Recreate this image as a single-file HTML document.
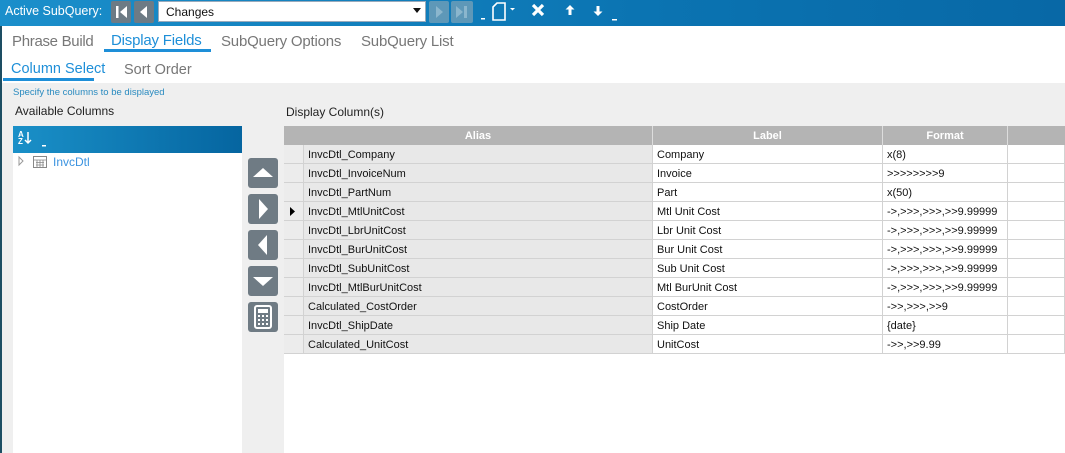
<!DOCTYPE html>
<html><head><meta charset="utf-8"><style>
*{margin:0;padding:0;box-sizing:border-box}
body{width:1065px;height:453px;overflow:hidden;background:#efefef;font-family:"Liberation Sans",sans-serif;position:relative}
.a{position:absolute}
.top{left:0;top:0;width:1065px;height:26px;background:linear-gradient(90deg,#1b8fcb,#0b74b2 60%,#0868a6)}
.tb{background:#6d7b85;border-radius:2px}
.row{position:absolute;left:284px;height:19px;width:781px;font-size:11px;color:#111}
.row div{position:absolute;top:0;height:19px;line-height:20px;padding-left:4px;border-bottom:1px solid #d2d2d2;border-right:1px solid #d2d2d2}
.c0{left:0;width:20px;background:#ececec}
.c1{left:20px;width:349px;background:#e8e8e8}
.c2{left:369px;width:230px;background:#fff}
.c3{left:599px;width:125px;background:#fff}
.c4{left:724px;width:57px;background:#fff}
.btn{position:absolute;left:248px;width:30px;height:30px;background:#6f7b84;border-radius:3px}
</style></head><body>
<div class="a" style="left:0;top:0;width:2px;height:453px;background:#1d4e63"></div>
<div class="a top"></div>
<div class="a" style="left:5px;top:4px;color:#fff;font-size:12.5px">Active SubQuery:</div>
<div class="a tb" style="left:111px;top:1px;width:20px;height:22px"><svg width="20" height="22"><rect x="5" y="5" width="2.5" height="12" fill="#fff"/><path d="M16 5 L9 11 L16 17Z" fill="#fff"/></svg></div>
<div class="a tb" style="left:134px;top:1px;width:20px;height:22px"><svg width="20" height="22"><path d="M13 5 L6 11 L13 17Z" fill="#fff"/></svg></div>
<div class="a" style="left:158px;top:1px;width:268px;height:21px;background:#fff;border:1px solid #9ab"></div>
<div class="a" style="left:166px;top:5px;font-size:12px;color:#111">Changes</div>
<div class="a" style="left:413px;top:8px;width:0;height:0;border-left:4px solid transparent;border-right:4px solid transparent;border-top:5px solid #111"></div>
<div class="a" style="left:429px;top:1px;width:20px;height:22px;background:#5e98b8;border-radius:2px"><svg width="20" height="22"><path d="M7 5 L14 11 L7 17Z" fill="#8bb6cd"/></svg></div>
<div class="a" style="left:451px;top:1px;width:22px;height:22px;background:#5e98b8;border-radius:2px"><svg width="22" height="22"><path d="M5 5 L12 11 L5 17Z" fill="#8bb6cd"/><rect x="13" y="5" width="3" height="12" fill="#8bb6cd"/></svg></div>
<svg class="a" style="left:478px;top:0" width="150" height="26">
<rect x="3" y="18" width="4" height="1.5" fill="#fff"/>
<path d="M15 7 L19 3 L27 3 L27 20 L15 20Z" fill="none" stroke="#fff" stroke-width="1.6"/>
<path d="M32 8 L37 8 L34.5 10.5Z" fill="#fff"/>
<path d="M55 5 L65 15 M65 5 L55 15" stroke="#fff" stroke-width="3.2"/>
<path d="M92 5 L96.5 9.5 L93.5 9.5 L93.5 15 L90.5 15 L90.5 9.5 L87.5 9.5Z" fill="#fff"/>
<path d="M120 16 L124.5 11.5 L121.5 11.5 L121.5 6 L118.5 6 L118.5 11.5 L115.5 11.5Z" fill="#fff"/>
<rect x="134" y="19" width="5" height="1.5" fill="#fff"/>
</svg>
<div class="a" style="left:2px;top:26px;width:1063px;height:57px;background:#fff"></div>
<div class="a" style="left:12px;top:33px;font-size:15px;color:#777;letter-spacing:-0.3px">Phrase Build</div>
<div class="a" style="left:111px;top:32px;font-size:15px;color:#1e8fd8;letter-spacing:-0.2px">Display Fields</div>
<div class="a" style="left:104px;top:49px;width:107px;height:3px;background:#1e8fd8"></div>
<div class="a" style="left:221px;top:33px;font-size:15px;color:#777;letter-spacing:-0.2px">SubQuery Options</div>
<div class="a" style="left:361px;top:33px;font-size:15px;color:#777;letter-spacing:-0.2px">SubQuery List</div>
<div class="a" style="left:11px;top:61px;font-size:14.5px;color:#1e8fd8">Column Select</div>
<div class="a" style="left:3px;top:78px;width:91px;height:3px;background:#1e8fd8"></div>
<div class="a" style="left:124px;top:62px;font-size:14.5px;color:#777">Sort Order</div>
<div class="a" style="left:13px;top:87px;font-size:9.5px;color:#2a8bc0">Specify the columns to be displayed</div>
<div class="a" style="left:15px;top:104px;font-size:12px;color:#222">Available Columns</div>
<div class="a" style="left:286px;top:105px;font-size:12px;color:#222">Display Column(s)</div>
<div class="a" style="left:13px;top:126px;width:229px;height:327px;background:#fff"></div>
<div class="a" style="left:13px;top:126px;width:229px;height:27px;background:linear-gradient(90deg,#1a90c8,#0565a0)"></div>
<div class="a" style="left:18px;top:131px;color:#fff;font-size:8px;line-height:7px;font-weight:bold">A<br>Z</div>
<svg class="a" style="left:24px;top:131px" width="30" height="16"><path d="M4 1 L4 12 M1 9 L4 12 L7 9" stroke="#fff" stroke-width="1.5" fill="none"/><rect x="18" y="14" width="4" height="1.5" fill="#fff"/></svg>
<svg class="a" style="left:17px;top:155px" width="40" height="14"><path d="M2 2 L6 6 L2 10Z" fill="none" stroke="#999"/><rect x="16.5" y="1.5" width="13" height="11" fill="none" stroke="#888"/><path d="M16 5 H30 M19 7.5 H27 M19 10 H27 M20 5 V12 M23 5 V12 M26 5 V12" stroke="#888" stroke-width="0.8"/></svg>
<div class="a" style="left:53px;top:155px;font-size:12px;color:#3b93e0">InvcDtl</div>
<div class="btn" style="top:158px"><svg width="30" height="30"><path d="M5 19 L15 10 L25 19Z" fill="#fff"/></svg></div>
<div class="btn" style="top:194px"><svg width="30" height="30"><path d="M11 5 L20 15 L11 25Z" fill="#fff"/></svg></div>
<div class="btn" style="top:230px"><svg width="30" height="30"><path d="M19 5 L10 15 L19 25Z" fill="#fff"/></svg></div>
<div class="btn" style="top:266px"><svg width="30" height="30"><path d="M5 11 L15 20 L25 11Z" fill="#fff"/></svg></div>
<div class="btn" style="top:302px"><svg width="30" height="30"><rect x="7" y="4" width="16" height="22" rx="2" fill="none" stroke="#fff" stroke-width="2"/><rect x="10" y="7" width="10" height="4" fill="#fff"/><g fill="#fff"><rect x="10" y="13" width="2" height="2"/><rect x="14" y="13" width="2" height="2"/><rect x="18" y="13" width="2" height="2"/><rect x="10" y="17" width="2" height="2"/><rect x="14" y="17" width="2" height="2"/><rect x="18" y="17" width="2" height="2"/><rect x="10" y="21" width="2" height="2"/><rect x="14" y="21" width="2" height="2"/><rect x="18" y="21" width="2" height="2"/></g></svg></div>
<div class="a" style="left:284px;top:126px;width:781px;height:327px;background:#fff"></div>
<div class="a" style="left:284px;top:126px;width:781px;height:19px;background:#b4b4b4;font-size:11px;font-weight:bold;color:#fff;line-height:20px">
<div class="a" style="left:20px;width:349px;text-align:center;border-right:1px solid #ddd;height:19px">Alias</div>
<div class="a" style="left:369px;width:230px;text-align:center;border-right:1px solid #ddd;height:19px">Label</div>
<div class="a" style="left:599px;width:125px;text-align:center;border-right:1px solid #ddd;height:19px">Format</div>
</div>
<div class="row" style="top:145px"><div class="c0"></div><div class="c1">InvcDtl_Company</div><div class="c2">Company</div><div class="c3">x(8)</div><div class="c4"></div></div>
<div class="row" style="top:164px"><div class="c0"></div><div class="c1">InvcDtl_InvoiceNum</div><div class="c2">Invoice</div><div class="c3">&gt;&gt;&gt;&gt;&gt;&gt;&gt;&gt;9</div><div class="c4"></div></div>
<div class="row" style="top:183px"><div class="c0"></div><div class="c1">InvcDtl_PartNum</div><div class="c2">Part</div><div class="c3">x(50)</div><div class="c4"></div></div>
<div class="row" style="top:202px"><div class="c0"><svg width="12" height="18" style="position:absolute;left:5px;top:0"><path d="M1 5 L6 9.5 L1 14Z" fill="#000"/></svg></div><div class="c1">InvcDtl_MtlUnitCost</div><div class="c2">Mtl Unit Cost</div><div class="c3">-&gt;,&gt;&gt;&gt;,&gt;&gt;&gt;,&gt;&gt;9.99999</div><div class="c4"></div></div>
<div class="row" style="top:221px"><div class="c0"></div><div class="c1">InvcDtl_LbrUnitCost</div><div class="c2">Lbr Unit Cost</div><div class="c3">-&gt;,&gt;&gt;&gt;,&gt;&gt;&gt;,&gt;&gt;9.99999</div><div class="c4"></div></div>
<div class="row" style="top:240px"><div class="c0"></div><div class="c1">InvcDtl_BurUnitCost</div><div class="c2">Bur Unit Cost</div><div class="c3">-&gt;,&gt;&gt;&gt;,&gt;&gt;&gt;,&gt;&gt;9.99999</div><div class="c4"></div></div>
<div class="row" style="top:259px"><div class="c0"></div><div class="c1">InvcDtl_SubUnitCost</div><div class="c2">Sub Unit Cost</div><div class="c3">-&gt;,&gt;&gt;&gt;,&gt;&gt;&gt;,&gt;&gt;9.99999</div><div class="c4"></div></div>
<div class="row" style="top:278px"><div class="c0"></div><div class="c1">InvcDtl_MtlBurUnitCost</div><div class="c2">Mtl BurUnit Cost</div><div class="c3">-&gt;,&gt;&gt;&gt;,&gt;&gt;&gt;,&gt;&gt;9.99999</div><div class="c4"></div></div>
<div class="row" style="top:297px"><div class="c0"></div><div class="c1">Calculated_CostOrder</div><div class="c2">CostOrder</div><div class="c3">-&gt;&gt;,&gt;&gt;&gt;,&gt;&gt;9</div><div class="c4"></div></div>
<div class="row" style="top:316px"><div class="c0"></div><div class="c1">InvcDtl_ShipDate</div><div class="c2">Ship Date</div><div class="c3">{date}</div><div class="c4"></div></div>
<div class="row" style="top:335px"><div class="c0"></div><div class="c1">Calculated_UnitCost</div><div class="c2">UnitCost</div><div class="c3">-&gt;&gt;,&gt;&gt;9.99</div><div class="c4"></div></div>
</body></html>
